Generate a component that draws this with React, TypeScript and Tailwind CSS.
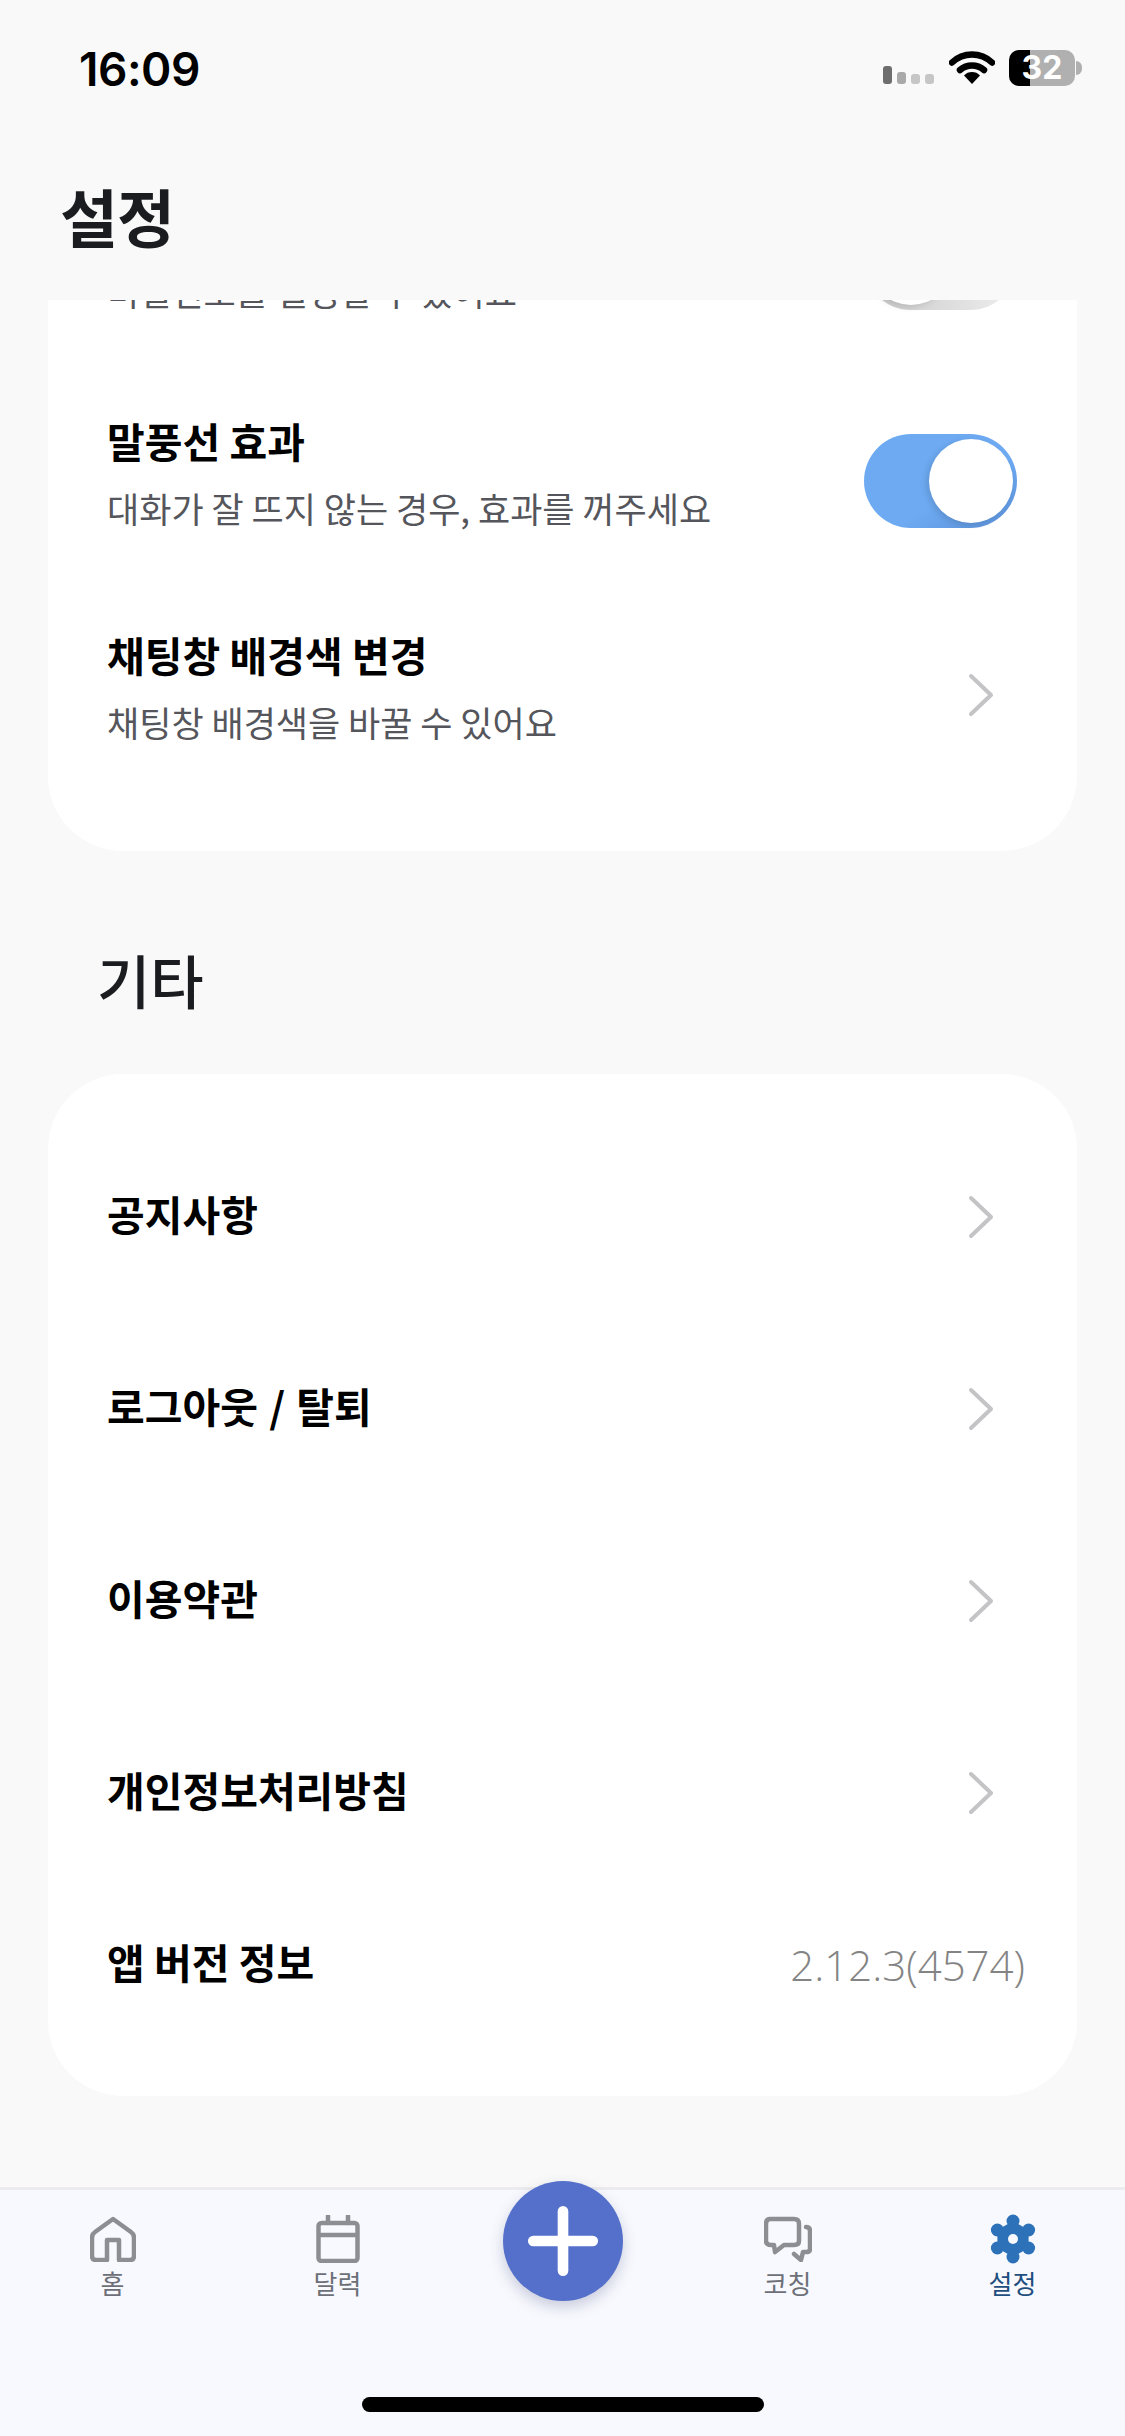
import React from 'react';
import { Plus } from 'lucide-react';

const kr = "font-['Noto_Sans_CJK_KR','Noto_Sans',sans-serif]";

const Toggle: React.FC<{ on?: boolean }> = ({ on }) => (
    <div className={`relative w-[153px] h-[94px] rounded-full shrink-0 ${on ? 'bg-gradient-to-br from-[#6daaf2] from-60% to-[#5b8fd6]' : 'bg-gradient-to-r from-[#c9c9c9] to-[#eeeeee]'}`}>
        <div className={`absolute top-[5px] w-[84px] h-[84px] rounded-full bg-white shadow-[-3px_2px_6px_rgba(0,0,0,0.12)] ${on ? 'right-[4px]' : 'left-[5px]'}`}></div>
    </div>
);

const Chevron: React.FC = () => (
    <svg width="28" height="44" viewBox="0 0 28 44" fill="none" stroke="#c4c4c6" strokeWidth="4" strokeLinecap="round" strokeLinejoin="round" className="shrink-0 mr-[22px]">
        <path d="M4 3 L24 22 L4 41" />
    </svg>
);

const SubRow: React.FC<{ title: string; sub: string; children: React.ReactNode }> = ({ title, sub, children }) => (
    <div className="h-[214px] pl-[59px] pr-[60px] flex items-center justify-between">
        <div className="flex flex-col pb-[19px]">
            <span className="text-[41px] leading-[60px] font-bold text-black">{title}</span>
            <span className="text-[35px] leading-[50px] mt-[13px] text-[#55565c]">{sub}</span>
        </div>
        {children}
    </div>
);

const LinkRow: React.FC<{ title: string; spaced?: boolean }> = ({ title, spaced }) => (
    <div className="h-[192px] pl-[59px] pr-[60px] flex items-center justify-between">
        <span className={`text-[41px] font-bold text-black pb-[7px] ${spaced ? '[word-spacing:2px]' : ''}`}>{title}</span>
        <Chevron />
    </div>
);

const Tab: React.FC<{ label: string; active?: boolean; children?: React.ReactNode }> = ({ label, active, children }) => (
    <div className="flex-1 flex flex-col items-center">
        <div className="h-[46px] flex items-center justify-center">{children}</div>
        <span className={`text-[26px] leading-[30px] mt-[6px] ${active ? 'text-[#1f4f7f]' : 'text-[#6d7078]'}`}>{label}</span>
    </div>
);

export default function App() {
    return (
        <div className={`relative w-[1125px] h-[2436px] bg-[#f9f9f9] flex flex-col overflow-hidden ${kr}`}>
            {/* Status bar */}
            <div className="h-[140px] px-[79px] pt-[44px] flex items-start justify-between shrink-0">
                <span className="font-['Inter',sans-serif] text-[46px] leading-[50px] font-semibold tracking-[-0.5px] text-black">16:09</span>
                <div className="flex items-start gap-[14px] mr-[-36px] mt-[6px]">
                    <svg width="52" height="36" viewBox="0 0 52 36" className="mt-[10px]">
                        <rect x="0" y="6" width="9" height="18" rx="3" fill="#6e6e6e" />
                        <rect x="14" y="12" width="9" height="12" rx="3" fill="#a9a9a9" />
                        <rect x="28" y="14" width="9" height="10" rx="3" fill="#c6c6c6" />
                        <rect x="42" y="14" width="9" height="10" rx="3" fill="#c6c6c6" />
                    </svg>
                    <svg width="46" height="34" viewBox="0 0 46 34">
                        <path d="M3 12.5 A29 29 0 0 1 43 12.5" fill="none" stroke="#000" strokeWidth="6.5" strokeLinecap="round" />
                        <path d="M11 20 A18 18 0 0 1 35 20" fill="none" stroke="#000" strokeWidth="6.5" strokeLinecap="round" />
                        <path d="M23 34 L15 25.5 A11 11 0 0 1 31 25.5 Z" fill="#000" />
                    </svg>
                    <div className="flex items-center">
                        <div className="relative w-[66px] h-[36px] rounded-[10px] overflow-hidden bg-[#b0b0b0]">
                            <div className="absolute left-0 top-0 bottom-0 w-[21px] bg-black"></div>
                            <span className="absolute inset-0 flex items-center justify-center font-['Inter',sans-serif] text-[32px] leading-[36px] font-bold text-white">32</span>
                        </div>
                        <div className="w-[6px] h-[14px] rounded-r-full bg-[#b0b0b0] ml-[1px]"></div>
                    </div>
                </div>
            </div>

            {/* Header */}
            <div className="h-[160px] px-[60px] shrink-0">
                <h1 className="text-[63px] leading-[80px] font-bold text-[#1b1c20] tracking-[-1px] mt-[35px]">설정</h1>
            </div>

            {/* Scrolled content */}
            <div className="flex-1 overflow-hidden">
                <div className="mx-[48px] bg-white rounded-b-[75px] pb-[49px]">
                    {/* Row scrolled under the header, only its bottom edge shows */}
                    <div className="-mt-[84px] h-[158px] pl-[59px] pr-[60px] flex items-start justify-between">
                        <span className="text-[35px] leading-[50px] mt-[50px] text-[#55565c]">비밀번호를 설정할 수 있어요</span>
                        <Toggle />
                    </div>
                    <SubRow title="말풍선 효과" sub="대화가 잘 뜨지 않는 경우, 효과를 꺼주세요">
                        <Toggle on />
                    </SubRow>
                    <SubRow title="채팅창 배경색 변경" sub="채팅창 배경색을 바꿀 수 있어요">
                        <Chevron />
                    </SubRow>
                </div>

                <h2 className="px-[97px] pt-[85px] pb-[51px] text-[58px] leading-[87px] font-medium text-[#1b1c20]">기타</h2>

                <div className="mx-[48px] bg-white rounded-[75px] pt-[47px] pb-[56px]">
                    <LinkRow title="공지사항" />
                    <LinkRow title="로그아웃 / 탈퇴" spaced />
                    <LinkRow title="이용약관" />
                    <LinkRow title="개인정보처리방침" />
                    <div className="h-[151px] pl-[59px] pr-[52px] flex items-center justify-between">
                        <span className="text-[41px] font-bold text-black pb-[6px]">앱 버전 정보</span>
                        <span className="font-['Open_Sans',sans-serif] font-light text-[42px] text-[#848484]">2.12.3(4574)</span>
                    </div>
                </div>
            </div>

            {/* Tab bar */}
            <div className="relative h-[249px] shrink-0 bg-[#f8f9fe] border-t-[3px] border-[#ececee] pt-[26px] flex items-start">
                <Tab label="홈">
                    <svg width="46" height="46" viewBox="0 0 46 46" fill="none" stroke="#8d8e92" strokeWidth="4.5" strokeLinejoin="round">
                        <path d="M23 3 L41 16 Q44 18 44 22 V40 Q44 44 40 44 H29 V24 H17 V44 H6 Q2 44 2 40 V22 Q2 18 5 16 Z" />
                    </svg>
                </Tab>
                <Tab label="달력">
                    <svg width="44" height="48" viewBox="0 0 44 48" fill="none" stroke="#8d8e92" strokeWidth="4.5">
                        <rect x="2.5" y="8" width="39" height="38" rx="3" />
                        <path d="M2 20 H42" />
                        <path d="M12 1 V8 M32 1 V8" strokeLinecap="round" />
                    </svg>
                </Tab>
                <div className="flex-1"></div>
                <Tab label="코칭">
                    <svg width="48" height="46" viewBox="0 0 48 46" fill="none" stroke="#8d8e92" strokeWidth="4.5" strokeLinejoin="round" strokeLinecap="round">
                        <path d="M6 3 H30 Q35 3 35 8 V25 Q35 29 30 29 H20 L11 36 L10 29 H7 Q2 29 2 25 V8 Q2 3 6 3 Z" />
                        <path d="M42 11 Q46 11 46 15 V33 Q46 36 42 36 H39 L37 44 L30 38" />
                    </svg>
                </Tab>
                <Tab label="설정" active>
                    <svg width="46" height="50" viewBox="-23 -25 46 50" fill="#2d72b8">
                        <path d="M0 -18 L15.6 -9 V9 L0 18 L-15.6 9 V-9 Z" />
                        <circle cx="0" cy="-18" r="6.5" />
                        <circle cx="15.6" cy="-9" r="6.5" />
                        <circle cx="15.6" cy="9" r="6.5" />
                        <circle cx="0" cy="18" r="6.5" />
                        <circle cx="-15.6" cy="9" r="6.5" />
                        <circle cx="-15.6" cy="-9" r="6.5" />
                        <circle cx="0" cy="0" r="5" fill="#f8f9fe" />
                    </svg>
                </Tab>

                {/* Floating add button */}
                <div className="absolute left-[503px] top-[-9px] w-[120px] h-[120px] rounded-full bg-[#5470cb] shadow-[0_6px_14px_rgba(60,70,120,0.25)] flex items-center justify-center">
                    <Plus size={102} strokeWidth={2.5} className="text-white" />
                </div>

                {/* Home indicator */}
                <div className="absolute left-[362px] bottom-[24px] w-[402px] h-[15px] rounded-full bg-black"></div>
            </div>
        </div>
    );
}
